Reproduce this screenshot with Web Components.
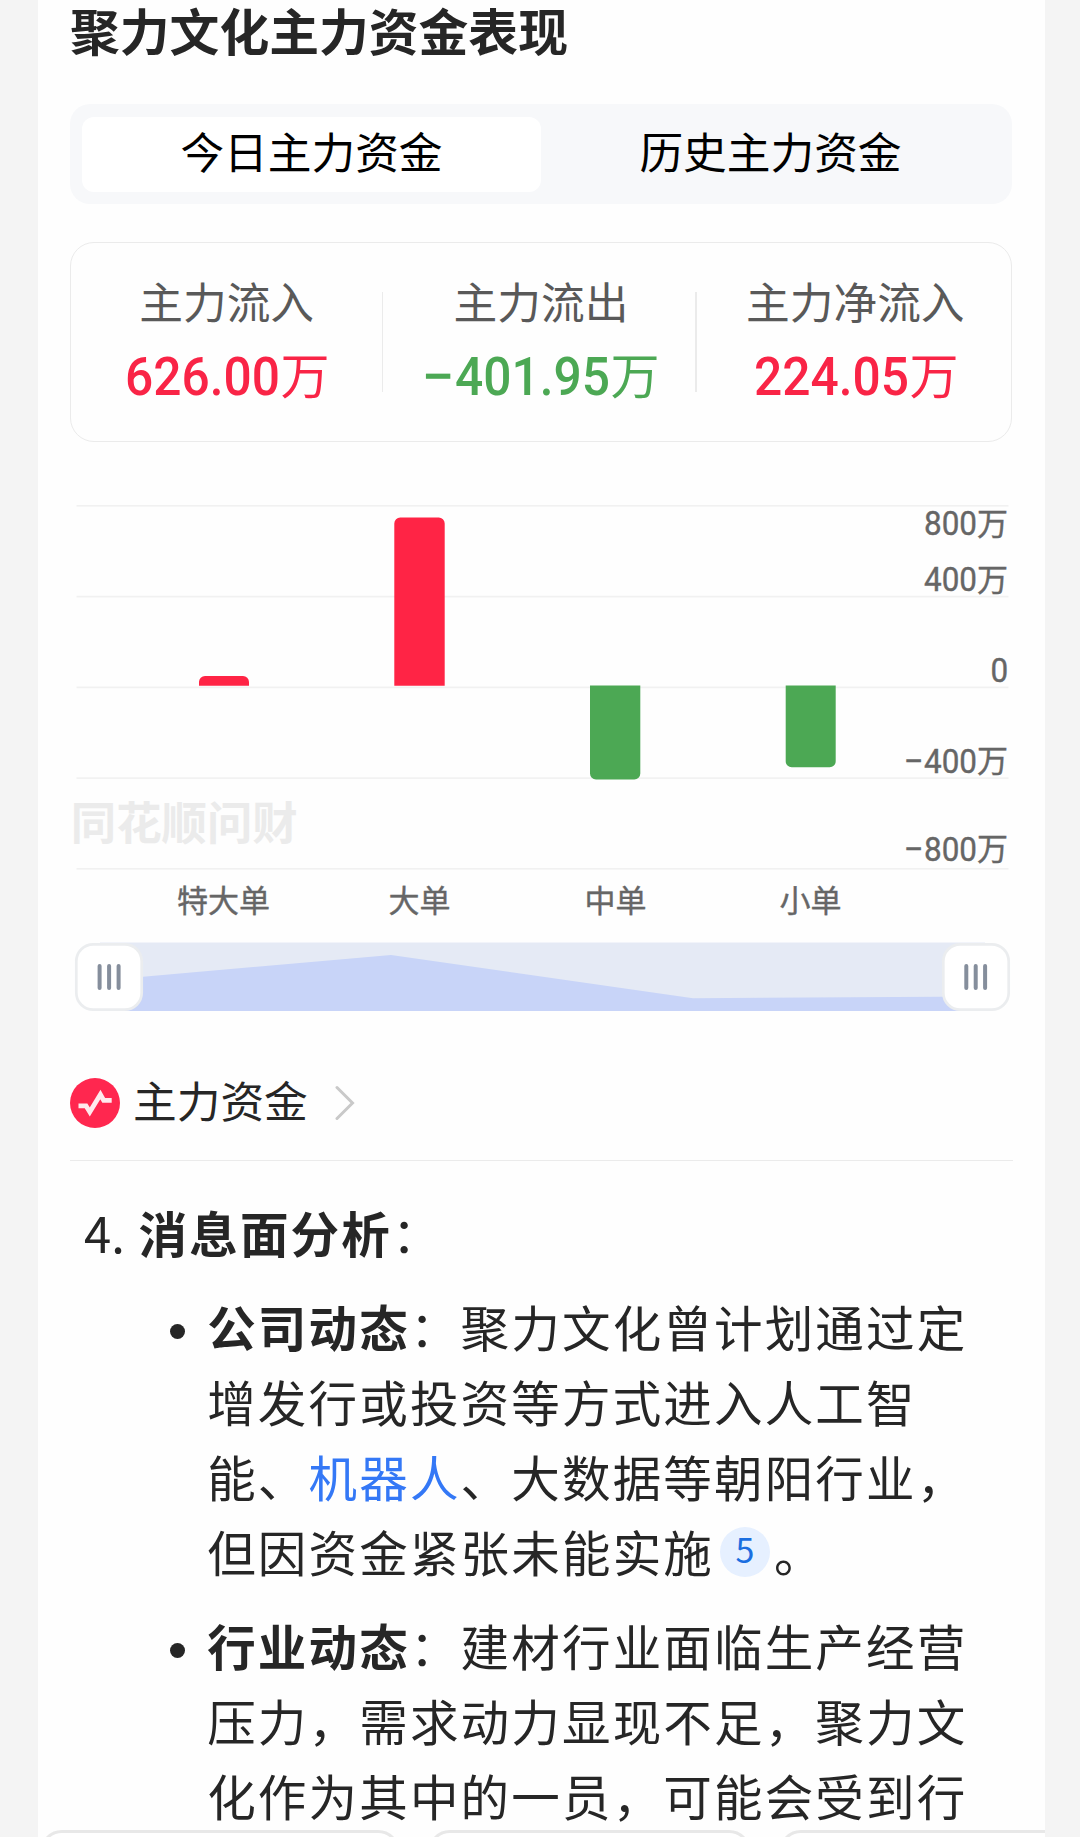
<!DOCTYPE html>
<html lang="zh-CN">
<head>
<meta charset="utf-8">
<title>聚力文化主力资金表现</title>
<style>
html,body{margin:0;padding:0}
body{background:#f4f4f4;height:1837px;overflow:hidden;color:#262626;font-family:"Noto Sans CJK SC",sans-serif}
</style>
</head>
<body>
<answer-card>
  <section-title>聚力文化主力资金表现</section-title>
  <tab-bar>
    <tab-item active>今日主力资金</tab-item>
    <tab-item>历史主力资金</tab-item>
  </tab-bar>
  <stat-panel>
    <stat-cell value="626.00" tone="up"><span>主力流入</span></stat-cell>
    <stat-cell value="401.95" tone="down" negative><span>主力流出</span></stat-cell>
    <stat-cell value="224.05" tone="up"><span>主力净流入</span></stat-cell>
  </stat-panel>
  <flow-chart></flow-chart>
  <range-slider></range-slider>
  <source-link>主力资金</source-link>
  <numbered-heading number="4."><b>消息面分析</b>：</numbered-heading>
  <bullet-item>
    <text-line><b>公司动态</b>：聚力文化曾计划通过定</text-line>
    <text-line>增发行或投资等方式进入人工智</text-line>
    <text-line>能、<entity-link>机器人</entity-link>、大数据等朝阳行业，</text-line>
    <text-line>但因资金紧张未能实施<cite-badge>5</cite-badge>。</text-line>
  </bullet-item>
  <bullet-item>
    <text-line><b>行业动态</b>：建材行业面临生产经营</text-line>
    <text-line>压力，需求动力显现不足，聚力文</text-line>
    <text-line>化作为其中的一员，可能会受到行</text-line>
  </bullet-item>
  <suggestion-strip slot="footer"></suggestion-strip>
</answer-card>

<script>
const define = (name, html) => customElements.define(name, class extends HTMLElement {
  constructor() {
    super();
    const root = this.attachShadow({ mode: 'open' });
    const t = document.createElement('template');
    t.innerHTML = typeof html === 'function' ? html(this) : html;
    root.append(t.content.cloneNode(true));
  }
});

define('answer-card', `<style>
:host{display:block;position:relative;box-sizing:border-box;height:1837px;margin:0 35px 0 38px;padding:0 32px;background:#fefefe;overflow:hidden}
.footer{position:absolute;left:0;right:0;bottom:0}
</style><slot></slot><div class="footer"><slot name="footer"></slot></div>`);

define('section-title', `<style>
:host{display:block;height:104px;line-height:69px;font-family:"Liberation Sans","Noto Sans CJK SC",sans-serif;font-size:49.8px;font-weight:700;color:#262626;white-space:nowrap}
</style><slot></slot>`);

define('tab-bar', `<style>
:host{display:flex;box-sizing:border-box;width:942px;height:100px;padding:13px 12px 12px;border-radius:20px;background:#f7f8fa}
</style><slot></slot>`);

define('tab-item', `<style>
:host{flex:1;border-radius:12px;text-align:center;line-height:67px;font-size:43.7px;color:#000;white-space:nowrap}
:host([active]){background:#fff}
</style><slot></slot>`);

define('stat-panel', `<style>
:host{display:flex;box-sizing:border-box;width:942px;height:200px;margin-top:38px;border:1.5px solid #ebebeb;border-radius:24px}
</style><slot></slot>`);

define('stat-cell', el => {
  const neg = el.hasAttribute('negative');
  const color = el.getAttribute('tone') === 'up' ? '#f92446' : '#4ca854';
  const w = neg ? 232 : 203, o = neg ? 30 : 0;
  return `<style>
:host{flex:1;position:relative;display:flex;flex-direction:column;align-items:center;padding:31px 3px 0 0;box-sizing:border-box}
:host(:last-child){padding:31px 0 0 1px}
:host([negative]){padding-right:2px}
:host(:not(:last-child))::after{content:"";position:absolute;right:2px;top:49px;width:1.500px;height:100px;background:#ebebeb}
.label{font-family:"Liberation Sans","Noto Sans CJK SC",sans-serif;font-size:43.7px;line-height:60px;color:#595959;white-space:nowrap}
svg{display:block;margin-top:8px;overflow:visible}
.n{font:500 54px Roboto,sans-serif}
.u{font:400 49px "Liberation Sans","Noto Sans CJK SC",sans-serif}
</style><span class="label"><slot></slot></span>
<svg width="${w}" height="60" fill="${color}">
${neg ? '<text class="n" x="-3.500" y="52.5" textLength="33" lengthAdjust="spacingAndGlyphs">−</text>' : ''}
<text class="n" x="${o}" y="52.5" textLength="155" lengthAdjust="spacingAndGlyphs">${el.getAttribute('value')}</text>
<text class="u" x="${o + 155.5}" y="52">万</text></svg>`;
});

define('flow-chart', () => {
  const grid = [505.7, 596.5, 687.3, 778, 868.7].map(y => `<rect x="76.500" y="${y - .7}" width="932" height="1.6" fill="#f1f1f1"/>`).join('');
  const bars = `<path fill="#ff2445" d="M199 685.7V682a6 6 0 0 1 6-6h38a6 6 0 0 1 6 6v3.700zM394.300 685.700V523.500a6 6 0 0 1 6-6h38.400a6 6 0 0 1 6 6v162.200z"/>
<path fill="#4ca854" d="M590 685.500h50.300V773.500a6 6 0 0 1-6 6H596a6 6 0 0 1-6-6zM785.700 685.500h50V761.300a6 6 0 0 1-6 6h-38a6 6 0 0 1-6-6z"/>`;
  const axis = [['800', 535], ['400', 591], ['0', 682], ['−400', 772.5], ['−800', 860.5]].map(([v, y]) => {
    if (v === '0') return `<text class="n" x="990.500" y="${y}" textLength="17.7" lengthAdjust="spacingAndGlyphs">0</text>`;
    const neg = v[0] === '−';
    return (neg ? `<text class="n" x="903.500" y="${y}" textLength="20" lengthAdjust="spacingAndGlyphs">−</text>` : '') +
      `<text class="n" x="924" y="${y}" textLength="53" lengthAdjust="spacingAndGlyphs">${v.slice(-3)}</text><text class="c" x="977" y="${y - .5}">万</text>`;
  }).join('');
  const cats = [['特大单', 223.5], ['大单', 419.5], ['中单', 615.5], ['小单', 810.5]].map(([t, x]) =>
    `<text class="c" x="${x}" y="912.300" text-anchor="middle">${t}</text>`).join('');
  return `<style>
:host{display:block;height:500px}
svg{display:block}
.n{font:400 34px Roboto,sans-serif;fill:#666;stroke:#666;stroke-width:.4}
.c{font:400 31px "Noto Sans CJK SC",sans-serif;fill:#666;stroke:#666;stroke-width:.4}
.w{font:700 45.4px "Noto Sans CJK SC",sans-serif;fill:#ebebeb}
</style><svg width="943" height="500" viewBox="70 442 943 500">${grid}<text class="w" x="70.800" y="840">同花顺问财</text>${bars}${axis}${cats}</svg>`;
});

define('range-slider', `<style>
:host{display:block;height:70px}
svg{display:block}
</style><svg width="943" height="70" viewBox="70 942 943 70">
<path d="M100 942.500H985V1011H100z" fill="#e5eaf5"/>
<path d="M110 979.500L143 976.700L391 955L693 998.200L941 996.700L975 996.500V1011H110z" fill="#c8d4f8"/>
<g fill="#fff" stroke="#ebedef" stroke-width="2.700"><rect x="76.300" y="944.300" width="65.400" height="65.400" rx="17"/><rect x="943.300" y="944.300" width="65.400" height="65.400" rx="17"/></g>
<g stroke="#858e9c" stroke-width="4" stroke-linecap="round"><path d="M99.600 966v22M109.100 966v22M118.600 966v22M966.300 966v22M975.700 966v22M985.100 966v22"/></g>
</svg>`);

define('source-link', `<style>
:host{display:flex;align-items:center;box-sizing:border-box;height:115px;margin-top:34px;font-size:43.7px;border-bottom:1.5px solid #ebebeb;color:#262626}
.label{margin-left:13px;line-height:60px;margin-top:-8px}
svg{flex:none}
.chev{margin-left:27px}
</style><svg width="50" height="50" viewBox="0 0 50 50"><circle cx="25" cy="25" r="25" fill="#ff274f"/><path d="M8.500 27.800H16L19.800 34L30.400 16.500L33.700 22.400H41.700" fill="none" stroke="#ffe9ed" stroke-width="4.800" stroke-miterlimit="10"/></svg>
<span class="label"><slot></slot></span>
<svg class="chev" width="20" height="36" viewBox="0 0 20 36"><path d="M2 2.500L17.500 18L2 33.500" fill="none" stroke="#c9c9c9" stroke-width="3" stroke-linecap="round"/></svg>`);

define('numbered-heading', el => `<style>
:host{display:flex;height:75px;margin-top:34px;padding-left:14px;line-height:75px;font-size:48.500px;letter-spacing:2.200px;white-space:nowrap}
.num{width:54.500px;font-size:49px;line-height:73px;letter-spacing:0}
</style><span class="num">${el.getAttribute('number')}</span><span><slot></slot></span>`);

define('bullet-item', `<style>
:host{display:flex;padding-left:99.500px;margin-top:19px}
.dot{flex:none;width:15.500px;height:15.500px;margin:34.500px 22.200px 0 0;border-radius:50%;background:#262626}
</style><span class="dot"></span><div><slot></slot></div>`);

define('text-line', `<style>
:host{display:block;height:75px;line-height:75px;font-size:48.500px;letter-spacing:2.180px;white-space:nowrap}
</style><slot></slot>`);

define('entity-link', `<style>:host{color:#3478f6}</style><slot></slot>`);

define('cite-badge', `<style>
:host{display:inline-block;width:50px;height:50px;margin:0 4px 0 6px;border-radius:50%;background:#e6f0ff;color:#1b6ee0;font-size:34px;line-height:44px;letter-spacing:0;text-align:center;vertical-align:9px}
</style><slot></slot>`);

define('suggestion-strip', `<style>
:host{display:flex;gap:28px;height:7px;overflow:hidden;padding-left:2px}
i{flex:none;box-sizing:border-box;height:80px;border:3px solid #e8e8e8;border-radius:22px;background:#fff}
</style><i style="width:360px"></i><i style="width:323px"></i><i style="width:360px"></i>`);
</script>
</body>
</html>
